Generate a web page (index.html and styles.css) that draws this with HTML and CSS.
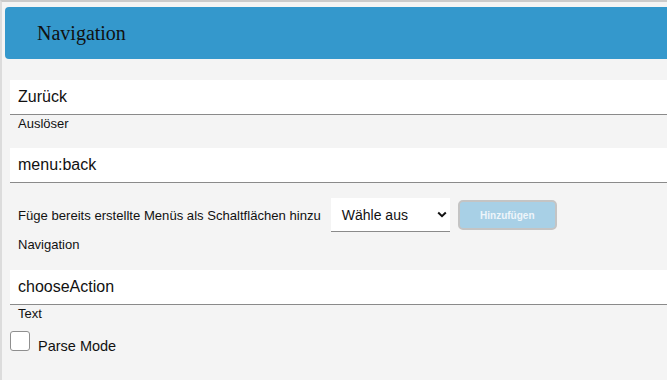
FILE: index.html
```html
<!DOCTYPE html>
<html lang="de">
<head>
<meta charset="utf-8">
<title>Navigation</title>
<link rel="stylesheet" href="styles.css">
</head>
<body>
<div class="page">
  <div class="header">Navigation</div>
  <div class="form">
    <input class="field" type="text" value="Zurück">
    <div class="label">Auslöser</div>
    <input class="field" type="text" value="menu:back">
    <div class="row">
      <span class="row-text">Füge bereits erstellte Menüs als Schaltflächen hinzu</span>
      <div class="select">
        <span>Wähle aus</span>
        <svg class="chev" width="10" height="7" viewBox="0 0 10 7"><path d="M1.2 1.5 L5 5.2 L8.8 1.5" fill="none" stroke="#111" stroke-width="2"/></svg>
      </div>
      <button class="btn" type="button">Hinzufügen</button>
    </div>
    <div class="label label-nav">Navigation</div>
    <input class="field" type="text" value="chooseAction">
    <div class="label label-last">Text</div>
    <div class="check-row">
      <span class="checkbox"></span>
      <span class="check-text">Parse Mode</span>
    </div>
  </div>
</div>
</body>
</html>
```

FILE: styles.css
```css
html, body {
  margin: 0;
  padding: 0;
  overflow: hidden;
  height: 100%;
}
body {
  background: #f4f4f4;
  border-top: 2px solid #cbcbcb;
  border-left: 2px solid #dcdcdc;
  box-sizing: border-box;
  font-family: "Liberation Sans", Arial, sans-serif;
  color: #111;
}
.page {
  margin-right: -30px;
}
.header {
  margin: 5px 0 0 3px;
  height: 52px;
  border-radius: 4px;
  background: #3498cc;
  padding-left: 32px;
  display: flex;
  align-items: center;
  font-family: "Liberation Serif", "Times New Roman", serif;
  font-size: 20px;
  color: #111;
}
.form {
  padding: 21px 0 0 8px;
}
.field {
  display: block;
  width: 100%;
  height: 35px;
  box-sizing: border-box;
  border: 0;
  border-bottom: 1px solid #8a8a8a;
  background: #fff;
  padding: 0 8px;
  margin: 0;
  font-family: "Liberation Sans", Arial, sans-serif;
  font-size: 16px;
  color: #111;
  outline: none;
}
.label {
  font-size: 13px;
  line-height: 15px;
  padding-left: 8px;
  margin-top: 1px;
  margin-bottom: 17px;
}
.label-nav {
  margin-top: 5px;
  margin-bottom: 18px;
}
.label-last {
  margin-bottom: 10px;
}
.row {
  margin-top: 15px;
  display: flex;
  align-items: center;
  padding-left: 8px;
}
.row-text {
  font-size: 13.1px;
  line-height: 15px;
  margin-right: 10px;
}
.select {
  width: 119px;
  height: 34px;
  box-sizing: border-box;
  background: #fff;
  border-bottom: 1px solid #8a8a8a;
  display: flex;
  align-items: center;
  justify-content: space-between;
  padding: 0 2px 0 11px;
  font-size: 14px;
  margin-right: 8px;
}
.chev {
  display: block;
  margin-right: 1px;
}
.btn {
  width: 99px;
  height: 30px;
  box-sizing: border-box;
  border: 2px solid #c4c4c4;
  border-radius: 5px;
  background: #a8d0e6;
  color: #eef5fa;
  font-family: "Liberation Sans", Arial, sans-serif;
  font-weight: bold;
  font-size: 10px;
  padding: 0;
}
.check-row {
  display: flex;
  align-items: baseline;
}
.checkbox {
  display: inline-block;
  width: 20px;
  height: 20px;
  box-sizing: border-box;
  border: 1px solid #8f8f8f;
  border-radius: 3px;
  background: #fff;
  margin-right: 8px;
}
.check-text {
  font-size: 14.5px;
}
```
